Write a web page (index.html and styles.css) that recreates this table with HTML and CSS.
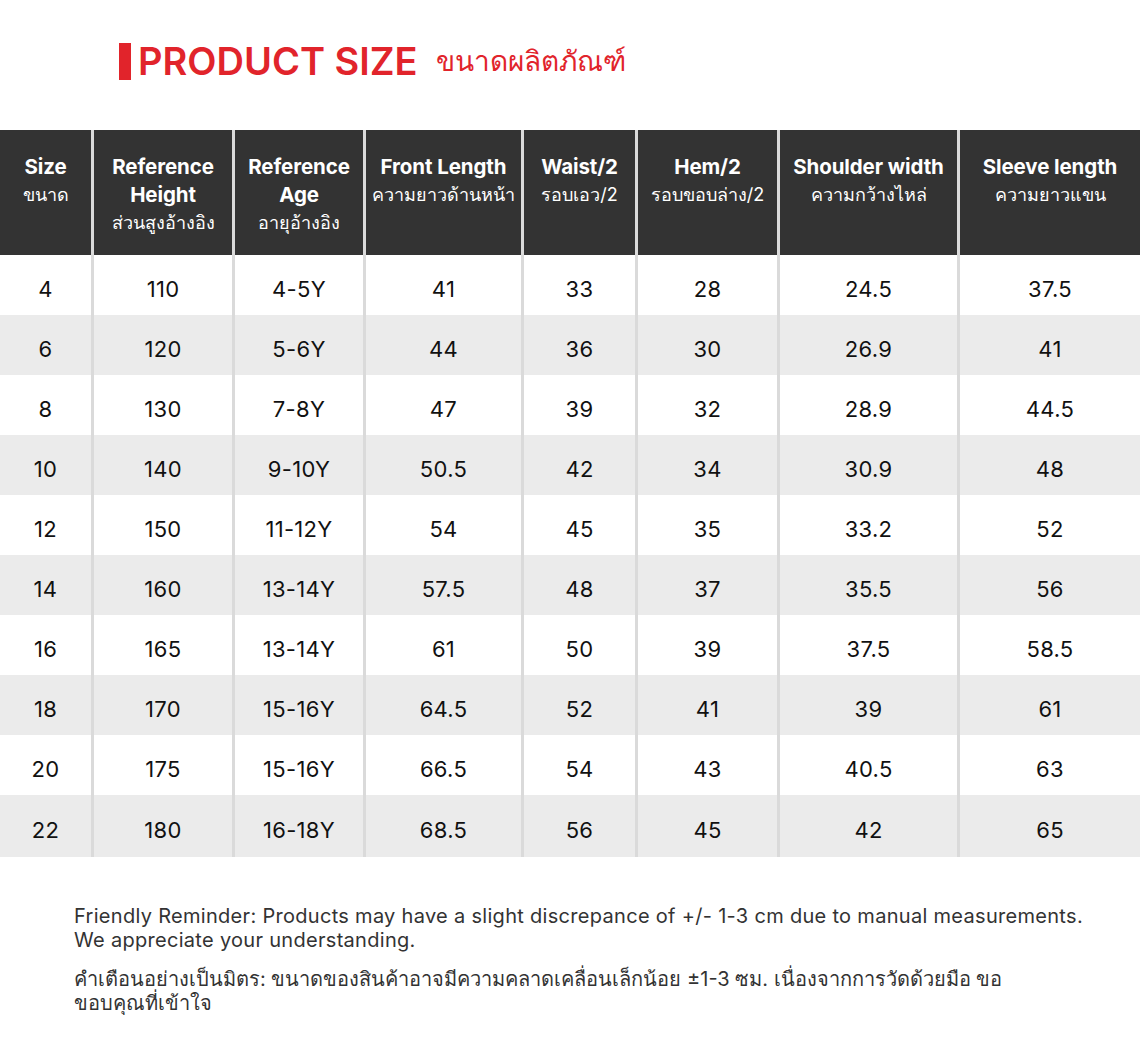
FILE: index.html
```html
<!DOCTYPE html>
<html lang="th">
<head>
<meta charset="utf-8">
<title>Product Size</title>
<link rel="stylesheet" href="styles.css">
</head>
<body>
<div class="page">
  <h1 class="title"><span class="bar"></span><span class="en">PRODUCT SIZE</span><span class="th">ขนาดผลิตภัณฑ์</span></h1>

  <div class="grid">
    <div class="hd"><b>Size</b><span>ขนาด</span></div>
    <div class="hd"><b>Reference<br>Height</b><span>ส่วนสูงอ้างอิง</span></div>
    <div class="hd"><b>Reference<br>Age</b><span>อายุอ้างอิง</span></div>
    <div class="hd"><b>Front Length</b><span>ความยาวด้านหน้า</span></div>
    <div class="hd"><b>Waist/2</b><span>รอบเอว/2</span></div>
    <div class="hd"><b>Hem/2</b><span>รอบขอบล่าง/2</span></div>
    <div class="hd"><b>Shoulder width</b><span>ความกว้างไหล่</span></div>
    <div class="hd"><b>Sleeve length</b><span>ความยาวแขน</span></div>

    <div class="c">4</div><div class="c">110</div><div class="c">4-5Y</div><div class="c">41</div><div class="c">33</div><div class="c">28</div><div class="c">24.5</div><div class="c">37.5</div>
    <div class="c g">6</div><div class="c g">120</div><div class="c g">5-6Y</div><div class="c g">44</div><div class="c g">36</div><div class="c g">30</div><div class="c g">26.9</div><div class="c g">41</div>
    <div class="c">8</div><div class="c">130</div><div class="c">7-8Y</div><div class="c">47</div><div class="c">39</div><div class="c">32</div><div class="c">28.9</div><div class="c">44.5</div>
    <div class="c g">10</div><div class="c g">140</div><div class="c g">9-10Y</div><div class="c g">50.5</div><div class="c g">42</div><div class="c g">34</div><div class="c g">30.9</div><div class="c g">48</div>
    <div class="c">12</div><div class="c">150</div><div class="c">11-12Y</div><div class="c">54</div><div class="c">45</div><div class="c">35</div><div class="c">33.2</div><div class="c">52</div>
    <div class="c g">14</div><div class="c g">160</div><div class="c g">13-14Y</div><div class="c g">57.5</div><div class="c g">48</div><div class="c g">37</div><div class="c g">35.5</div><div class="c g">56</div>
    <div class="c">16</div><div class="c">165</div><div class="c">13-14Y</div><div class="c">61</div><div class="c">50</div><div class="c">39</div><div class="c">37.5</div><div class="c">58.5</div>
    <div class="c g">18</div><div class="c g">170</div><div class="c g">15-16Y</div><div class="c g">64.5</div><div class="c g">52</div><div class="c g">41</div><div class="c g">39</div><div class="c g">61</div>
    <div class="c">20</div><div class="c">175</div><div class="c">15-16Y</div><div class="c">66.5</div><div class="c">54</div><div class="c">43</div><div class="c">40.5</div><div class="c">63</div>
    <div class="c g">22</div><div class="c g">180</div><div class="c g">16-18Y</div><div class="c g">68.5</div><div class="c g">56</div><div class="c g">45</div><div class="c g">42</div><div class="c g">65</div>
  </div>

  <div class="notes">
    <p class="en-note">Friendly Reminder: Products may have a slight discrepance of +/- 1-3 cm due to manual measurements. We appreciate your understanding.</p>
    <p class="th-note">คำเตือนอย่างเป็นมิตร: ขนาดของสินค้าอาจมีความคลาดเคลื่อนเล็กน้อย ±1-3 ซม. เนื่องจากการวัดด้วยมือ ขอ ขอบคุณที่เข้าใจ</p>
  </div>
</div>
</body>
</html>
```

FILE: styles.css
```css
html, body {
  margin: 0;
  padding: 0;
  background: #ffffff;
}

.page {
  width: 1141px;
  font-family: Inter, "Noto Sans", "DejaVu Sans", sans-serif;
  color: #111111;
}

.title {
  margin: 0;
  padding: 36px 0 0 119px;
  height: 86px;
  box-sizing: border-box;
  display: flex;
  align-items: center;
  color: #e1242b;
  font-weight: 600;
  line-height: 44px;
}

.title .bar {
  width: 12px;
  height: 37px;
  background: #e1242b;
  margin-right: 7px;
}

.title .en {
  font-size: 38px;
}

.title .th {
  font-size: 28px;
  font-weight: 400;
  margin-left: 18px;
}

.grid {
  margin-top: 44px;
  display: grid;
  grid-template-columns: 91px 138px 128px 155px 111px 139px 177px 180px;
  grid-template-rows: 125px repeat(9, 60px) 62px;
  column-gap: 3px;
  background: #dadada;
  width: 1140px;
}

.hd {
  background: #333333;
  color: #ffffff;
  text-align: center;
  padding-top: 23px;
  box-sizing: border-box;
  display: flex;
  flex-direction: column;
  align-items: center;
}

.hd b {
  font-size: 20.5px;
  font-weight: 700;
  line-height: 28px;
  letter-spacing: -0.1px;
}

.hd span {
  font-size: 18px;
  line-height: 27px;
  font-weight: 400;
}

.c {
  background: #ffffff;
  display: flex;
  align-items: center;
  justify-content: center;
  padding-top: 7px;
  box-sizing: border-box;
  font-size: 22px;
  letter-spacing: 0.3px;
}

.c.g {
  background: #ebebeb;
}

.notes {
  padding: 47px 0 0 74px;
  color: #333333;
  font-size: 20px;
  line-height: 24px;
}

.notes p {
  margin: 0;
}

.notes .en-note {
  width: 1030px;
  letter-spacing: 0.3px;
}

.notes .th-note {
  margin-top: 15px;
  width: 960px;
}
```
